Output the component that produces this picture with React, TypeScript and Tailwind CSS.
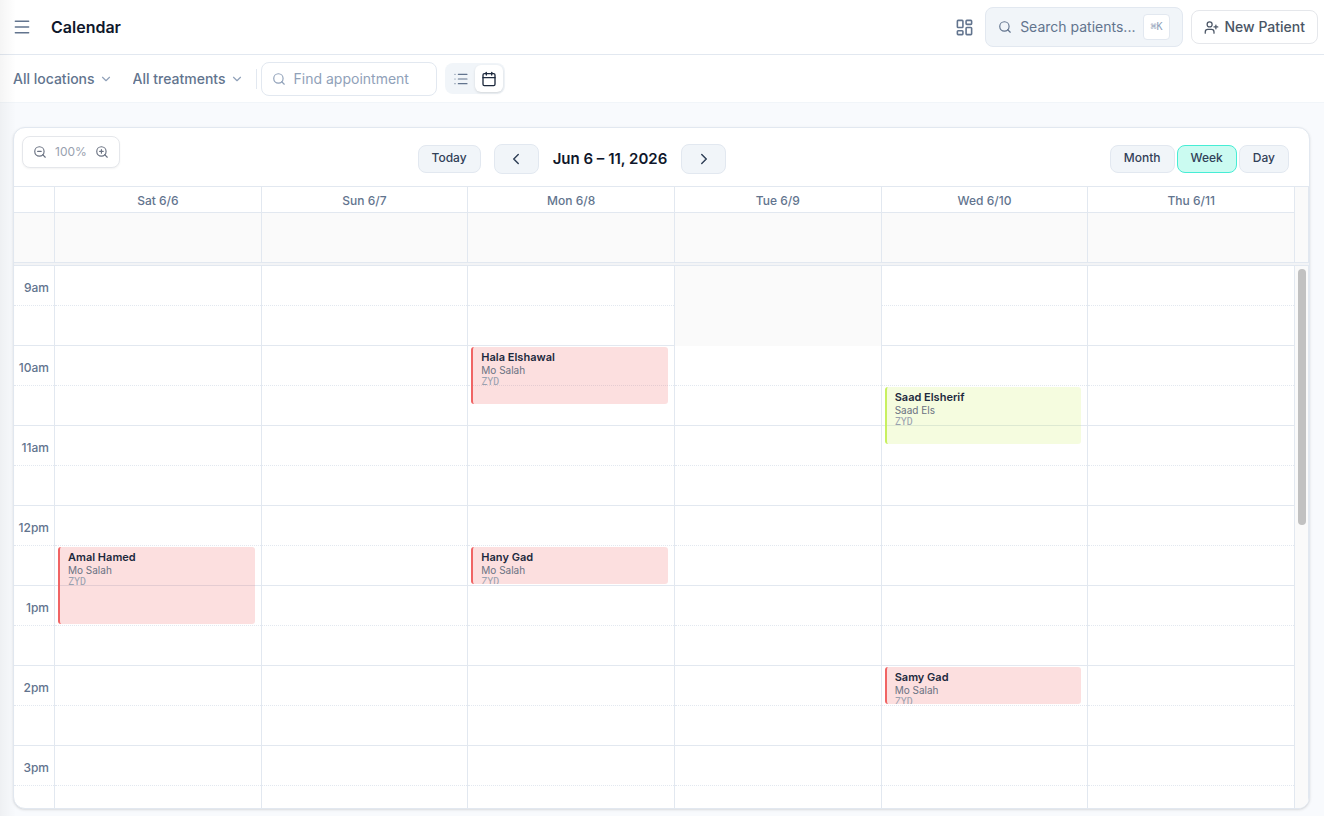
import React from "react";
import {
  Calendar,
  ChevronDown,
  ChevronLeft,
  ChevronRight,
  LayoutDashboard,
  List,
  Menu,
  Search,
  UserPlus,
  ZoomIn,
  ZoomOut,
} from "lucide-react";

type Tone = "red" | "lime";

interface Appointment {
  patient: string;
  doctor: string;
  site: string;
  start: number;
  minutes: number;
  tone: Tone;
}

interface Day {
  label: string;
  blockedUntil?: number;
  appointments: Appointment[];
}

const FIRST_HOUR = 9;
const HOUR_HEIGHT = 80;
const HOURS = ["9am", "10am", "11am", "12pm", "1pm", "2pm", "3pm"];

const DAYS: Day[] = [
  {
    label: "Sat 6/6",
    appointments: [
      { patient: "Amal Hamed", doctor: "Mo Salah", site: "ZYD", start: 12.5, minutes: 60, tone: "red" },
    ],
  },
  { label: "Sun 6/7", appointments: [] },
  {
    label: "Mon 6/8",
    appointments: [
      { patient: "Hala Elshawal", doctor: "Mo Salah", site: "ZYD", start: 10, minutes: 45, tone: "red" },
      { patient: "Hany Gad", doctor: "Mo Salah", site: "ZYD", start: 12.5, minutes: 30, tone: "red" },
    ],
  },
  { label: "Tue 6/9", blockedUntil: 10, appointments: [] },
  {
    label: "Wed 6/10",
    appointments: [
      { patient: "Saad Elsherif", doctor: "Saad Els", site: "ZYD", start: 10.5, minutes: 45, tone: "lime" },
      { patient: "Samy Gad", doctor: "Mo Salah", site: "ZYD", start: 14, minutes: 30, tone: "red" },
    ],
  },
  { label: "Thu 6/11", appointments: [] },
];

const TONES: Record<Tone, string> = {
  red: "border-[#f06464] bg-[#ef4444]/17",
  lime: "border-[#c8f060] bg-[#c8f04d]/18",
};

function FilterSelect({ label, value }: { label: string; value: string }) {
  return (
    <div className="flex items-center gap-1">
      <select
        aria-label={label}
        className="appearance-none bg-transparent text-sm font-medium text-slate-500 [field-sizing:content]"
      >
        <option>{value}</option>
      </select>
      <ChevronDown className="size-[14px] text-slate-400" strokeWidth={2} aria-hidden />
    </div>
  );
}

function Header() {
  return (
    <header className="flex h-[55px] items-center border-b border-slate-200 bg-white pr-[6px] pl-3">
      <button aria-label="Toggle menu" className="text-slate-500">
        <Menu className="size-5" strokeWidth={1.75} />
      </button>
      <h1 className="ml-[19px] text-base font-semibold text-slate-900">Calendar</h1>
      <div className="ml-auto flex items-center">
        <button aria-label="Dashboard" className="mr-[11px] text-slate-500">
          <LayoutDashboard className="size-[19px]" strokeWidth={2} />
        </button>
        <button className="mr-2 flex h-10 items-center rounded-lg border border-slate-200 bg-slate-100 px-3 text-sm text-slate-500">
          <Search className="mr-2 size-[14px]" strokeWidth={2} />
          <span>Search patients...</span>
          <kbd className="ml-2 flex h-[26px] items-center rounded border border-slate-200 bg-white px-[6px] font-['DejaVu_Sans_Mono',monospace] text-[10px] text-slate-400">
            ⌘K
          </kbd>
        </button>
        <button className="flex h-[34px] items-center gap-[6px] rounded-lg border border-gray-200 bg-white px-3 text-sm font-medium text-gray-600">
          <UserPlus className="size-[15px]" strokeWidth={2} />
          New Patient
        </button>
      </div>
    </header>
  );
}

function FilterBar() {
  return (
    <div className="flex h-12 items-center border-b border-slate-100 bg-white pl-[13px]">
      <div className="flex items-center gap-5">
        <FilterSelect label="Location" value="All locations" />
        <FilterSelect label="Treatment" value="All treatments" />
      </div>
      <div className="mr-1 ml-3 h-5 w-px bg-slate-200" />
      <label className="flex h-[34px] w-44 items-center gap-2 rounded-lg border border-slate-200 bg-white px-[10px]">
        <Search className="size-[14px] shrink-0 text-slate-400" strokeWidth={2} aria-hidden />
        <input
          type="search"
          aria-label="Find appointment"
          placeholder="Find appointment"
          className="w-full min-w-0 bg-transparent text-sm text-slate-700 outline-none placeholder:text-slate-400"
        />
      </label>
      <div className="ml-2 flex h-[31px] items-center rounded-lg bg-slate-100 p-[2px]">
        <button aria-label="List view" className="flex h-[27px] w-7 items-center justify-center text-slate-500">
          <List className="size-4" strokeWidth={1.75} />
        </button>
        <button
          aria-label="Calendar view"
          aria-pressed="true"
          className="flex h-[27px] w-7 items-center justify-center rounded-md bg-white text-slate-800 shadow-sm"
        >
          <Calendar className="size-4" strokeWidth={2} />
        </button>
      </div>
    </div>
  );
}

function RangeButton({ label, active = false }: { label: string; active?: boolean }) {
  return (
    <button
      aria-pressed={active}
      className={`flex h-7 items-center rounded-lg border px-[13px] pb-[2px] text-xs font-medium text-slate-700 ${
        active ? "border-teal-300 bg-teal-100" : "border-slate-200 bg-slate-100"
      }`}
    >
      {label}
    </button>
  );
}

function ArrowButton({ label, children }: { label: string; children: React.ReactNode }) {
  return (
    <button
      aria-label={label}
      className="flex h-[30px] w-[45px] items-center justify-center rounded-lg border border-slate-200 bg-slate-100 text-slate-700"
    >
      {children}
    </button>
  );
}

function Toolbar() {
  return (
    <div className="flex items-center justify-between px-5 pt-4 pb-3">
      <div />
      <div className="flex items-center">
        <RangeButton label="Today" />
        <div className="ml-[13px] flex items-center gap-[14px]">
          <ArrowButton label="Previous week">
            <ChevronLeft className="size-[18px]" strokeWidth={2} />
          </ArrowButton>
          <h2 className="text-[15px] leading-5 font-semibold text-slate-900">Jun 6 – 11, 2026</h2>
          <ArrowButton label="Next week">
            <ChevronRight className="size-[18px]" strokeWidth={2} />
          </ArrowButton>
        </div>
      </div>
      <div className="flex items-center gap-[2px]">
        <RangeButton label="Month" />
        <RangeButton label="Week" active />
        <RangeButton label="Day" />
      </div>
    </div>
  );
}

function ZoomControl() {
  return (
    <div className="absolute top-2 left-2 flex h-8 items-center gap-2 rounded-lg border border-gray-200 bg-white px-[10px] text-gray-500 shadow-xs">
      <button aria-label="Zoom out">
        <ZoomOut className="size-[14px]" strokeWidth={2} />
      </button>
      <span className="w-8 text-center text-xs text-gray-400">100%</span>
      <button aria-label="Zoom in">
        <ZoomIn className="size-[14px]" strokeWidth={2} />
      </button>
    </div>
  );
}

function AppointmentCard({ item }: { item: Appointment }) {
  return (
    <article
      className={`absolute right-[6px] left-[3px] overflow-hidden rounded-[3px] border-l-2 pt-1 pl-2 font-normal ${TONES[item.tone]}`}
      style={{
        top: (item.start - FIRST_HOUR) * HOUR_HEIGHT + 2,
        height: (item.minutes / 60) * HOUR_HEIGHT - 3,
      }}
    >
      <h3 className="text-[11px] leading-[13px] font-semibold text-slate-800">{item.patient}</h3>
      <p className="text-[10px] leading-3 text-gray-500">{item.doctor}</p>
      <p className="font-['DejaVu_Sans_Mono',monospace] text-[10px] leading-3 text-gray-400">{item.site}</p>
    </article>
  );
}

function DayColumn({ day }: { day: Day }) {
  return (
    <div className="relative border-r border-slate-200">
      {HOURS.map((hour) => (
        <div key={hour}>
          <div className="h-10 border-t border-slate-200" />
          <div className="h-10 border-t border-dotted border-slate-200" />
        </div>
      ))}
      {day.blockedUntil && (
        <div
          className="absolute inset-x-0 top-px bg-neutral-50"
          style={{ height: (day.blockedUntil - FIRST_HOUR) * HOUR_HEIGHT }}
        />
      )}
      {day.appointments.map((item) => (
        <AppointmentCard key={item.patient} item={item} />
      ))}
    </div>
  );
}

function WeekGrid() {
  return (
    <div className="flex min-h-0 flex-1 flex-col text-xs font-medium text-slate-500">
      <div className="flex shrink-0 border-t border-slate-200">
        <div className="w-[41px] shrink-0 border-r border-slate-200">
          <div className="h-[26px] border-b border-slate-200" />
          <div className="h-[49px] bg-neutral-50" />
        </div>
        <div className="grid flex-1 grid-cols-6">
          {DAYS.map((day) => (
            <div key={day.label} className="border-r border-slate-200">
              <div className="flex h-[26px] items-center justify-center border-b border-slate-200 pt-[2px]">
                {day.label}
              </div>
              <div className="h-[49px] bg-neutral-50" />
            </div>
          ))}
        </div>
        <div className="w-[14px] shrink-0 border-r border-slate-200 bg-neutral-50" />
      </div>
      <div className="h-[3px] shrink-0 border-t border-slate-200 bg-gray-100" />
      <div className="flex min-h-0 flex-1 overflow-hidden">
        <div className="w-[41px] shrink-0 self-start border-r border-slate-200">
          {HOURS.map((hour) => (
            <div key={hour}>
              <div className="flex h-10 items-center justify-end border-t border-slate-200 pt-1 pr-[5px]">
                {hour}
              </div>
              <div className="h-10 border-t border-dotted border-slate-200" />
            </div>
          ))}
        </div>
        <div className="grid flex-1 grid-cols-6 self-start">
          {DAYS.map((day) => (
            <DayColumn key={day.label} day={day} />
          ))}
        </div>
        <div className="w-[14px] shrink-0 border-t border-r border-slate-200 bg-neutral-50 px-[3px] pt-[3px]">
          <div className="h-64 w-2 rounded-full bg-[#c1c1c1]" />
        </div>
      </div>
    </div>
  );
}

export default function App() {
  return (
    <div className="relative flex h-screen flex-col overflow-hidden bg-[#f8fafd] font-['Inter',sans-serif]">
      <Header />
      <FilterBar />
      <main className="flex min-h-0 flex-1 flex-col pt-6 pr-[14px] pb-[7px] pl-[13px]">
        <section
          aria-label="Week calendar"
          className="relative flex min-h-0 flex-1 flex-col overflow-hidden rounded-xl border border-slate-200 bg-white shadow-sm"
        >
          <Toolbar />
          <ZoomControl />
          <WeekGrid />
        </section>
      </main>
      <div className="pointer-events-none absolute inset-y-0 left-0 w-4 bg-linear-to-r from-black/4 to-transparent" />
    </div>
  );
}
